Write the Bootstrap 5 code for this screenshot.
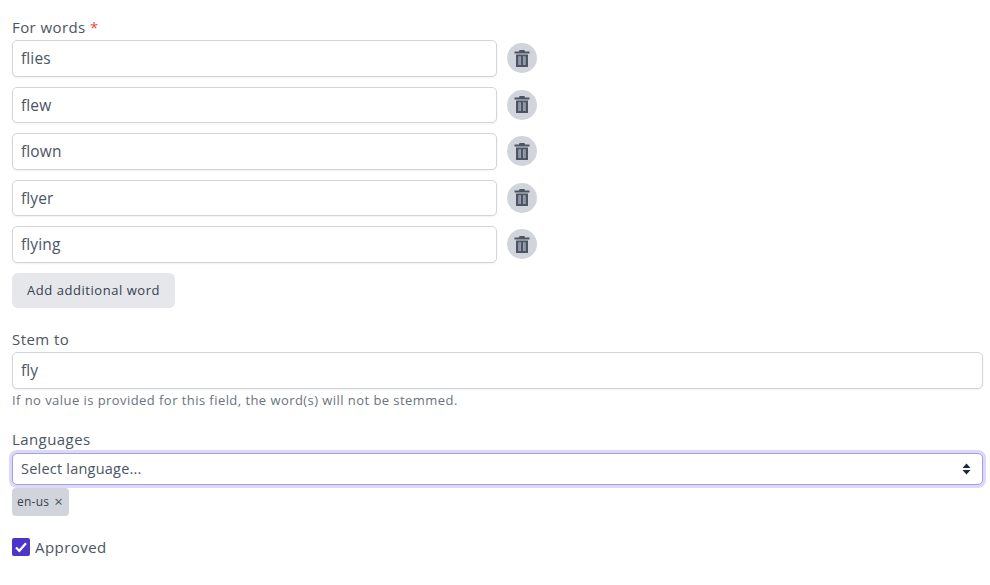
<!DOCTYPE html>
<html lang="en">
<head>
    <meta charset="UTF-8">
    <meta name="viewport" content="width=device-width, initial-scale=1.0">
    <title>Stem word</title>
    <link href="https://cdn.jsdelivr.net/npm/bootstrap@5.3.0/dist/css/bootstrap.min.css" rel="stylesheet">
    <style>
        body {
            background: #fff;
            color: #4b5563;
            font-family: "Open Sans", sans-serif;
            font-size: 15px;
        }
        .page-form {
            padding: 18px 7px 0 12px;
        }
        .field-label {
            display: block;
            font-size: 15px;
            line-height: 18px;
            margin-bottom: 4px;
            letter-spacing: .42px;
        }
        .req-star {
            color: #ef4444;
        }
        .word-row {
            height: 36.5px;
            margin-bottom: 10px;
            gap: 10px;
        }
        .word-input {
            width: 485px;
            height: 36.5px;
            flex: none;
            padding: 0 8px;
            font-size: 15.5px;
            letter-spacing: .12px;
            color: #4b5563;
            border-color: #d1d5db;
            border-radius: 5px;
            box-shadow: 0 1px 2px rgba(0, 0, 0, .06);
        }
        .trash-btn {
            width: 30px;
            height: 30px;
            flex: none;
            border: 0;
            padding: 0;
            border-radius: 50%;
            background: #d1d5db;
            display: flex;
            align-items: center;
            justify-content: center;
        }
        .add-btn {
            height: 35px;
            width: 163px;
            padding: 2px 0 0 0;
            background: #e5e7eb;
            border: 0;
            border-radius: 6px;
            color: #374151;
            font-size: 13px;
            font-weight: 500;
            letter-spacing: .55px;
        }
        .stem-group {
            margin-top: 22px;
        }
        .stem-group .field-label {
            margin-bottom: 4px;
        }
        .stem-input {
            height: 37px;
            padding: 0 8px;
            font-size: 15.5px;
            color: #4b5563;
            border-color: #d1d5db;
            border-radius: 5px;
            box-shadow: 0 1px 2px rgba(0, 0, 0, .06);
        }
        .help-line {
            font-size: 13px;
            line-height: 17px;
            margin-top: 3px;
            color: #6b7280;
            letter-spacing: .44px;
        }
        .lang-group {
            margin-top: 21px;
        }
        .lang-select {
            height: 32px;
            padding: 0 8px;
            font-size: 14.5px;
            letter-spacing: .22px;
            color: #4b5563;
            border: 1px solid #a79ee6;
            border-radius: 5px;
            box-shadow: 0 0 0 3px #dcd8f7;
            background-image: none;
        }
        .select-wrap {
            position: relative;
            margin-top: 5px;
        }
        .select-arrows {
            position: absolute;
            right: 12px;
            top: 10px;
        }
        .lang-chip {
            display: inline-flex;
            align-items: center;
            gap: 5px;
            height: 28px;
            width: 57px;
            margin-top: 3px;
            padding-left: 5px;
            background: #d1d5db;
            border-radius: 4px;
            font-size: 12px;
            color: #374151;
            letter-spacing: .25px;
        }
        .chip-x {
            color: #4b5563;
            font-size: 15px;
            line-height: 1;
        }
        .approve-row {
            margin-top: 22px;
            gap: 5px;
        }
        .approve-box {
            width: 18px;
            height: 18px;
            flex: none;
            border-radius: 2px;
            background: #4c35c9;
            display: flex;
            align-items: center;
            justify-content: center;
        }
        .approve-text {
            font-size: 15px;
            line-height: 18px;
            letter-spacing: .45px;
        }
    </style>
</head>
<body>
    <form class="page-form">
        <label class="field-label">For words <span class="req-star">*</span></label>

        <div id="word-list"></div>

        <button type="button" class="btn add-btn">Add additional word</button>

        <div class="stem-group">
            <label class="field-label">Stem to</label>
            <input type="text" class="form-control stem-input" value="fly">
            <div class="help-line">If no value is provided for this field, the word(s) will not be stemmed.</div>
        </div>

        <div class="lang-group">
            <label class="field-label mb-0">Languages</label>
            <div class="select-wrap">
                <select class="form-select lang-select">
                    <option>Select language...</option>
                </select>
                <svg class="select-arrows" width="9" height="12" viewBox="0 0 9 12">
                    <path d="M4.5 0.5 L8.5 5 H0.5 Z M0.5 7 H8.5 L4.5 11.5 Z" fill="#1f2937"/>
                </svg>
            </div>
            <span class="lang-chip">en-us <span class="chip-x">&times;</span></span>
        </div>

        <div class="d-flex align-items-center approve-row">
            <span class="approve-box">
                <svg width="14" height="14" viewBox="0 0 14 14">
                    <path d="M2 7.5 L5.3 10.8 L12 3.2" fill="none" stroke="#fff" stroke-width="2.2"/>
                </svg>
            </span>
            <span class="approve-text">Approved</span>
        </div>
    </form>

    <script>
        const words = ["flies", "flew", "flown", "flyer", "flying"];
        let rows = "";
        words.forEach(word => {
            rows += `<div class="d-flex align-items-center word-row">
                <input type="text" class="form-control word-input" value="${word}">
                <button type="button" class="trash-btn" aria-label="Remove">
                    <svg width="16" height="17" viewBox="0 0 16 17">
                        <path d="M5.5 0 H10.5 L11 1.5 H15.5 V3.5 H0.5 V1.5 H5 Z" fill="#4b5563"/>
                        <path fill-rule="evenodd" d="M2 4.5 H14 V17 H2 Z M4.6 6.5 V15 H6.8 V6.5 Z M9.2 6.5 V15 H11.4 V6.5 Z" fill="#4b5563"/>
                        <path d="M4.6 6.5 H6.8 V15 H4.6 Z M9.2 6.5 H11.4 V15 H9.2 Z" fill="#8f96a3"/>
                    </svg>
                </button>
            </div>`;
        });
        document.getElementById("word-list").innerHTML = rows;
    </script>
    <script src="https://cdn.jsdelivr.net/npm/bootstrap@5.3.0/dist/js/bootstrap.bundle.min.js"></script>
</body>
</html>
